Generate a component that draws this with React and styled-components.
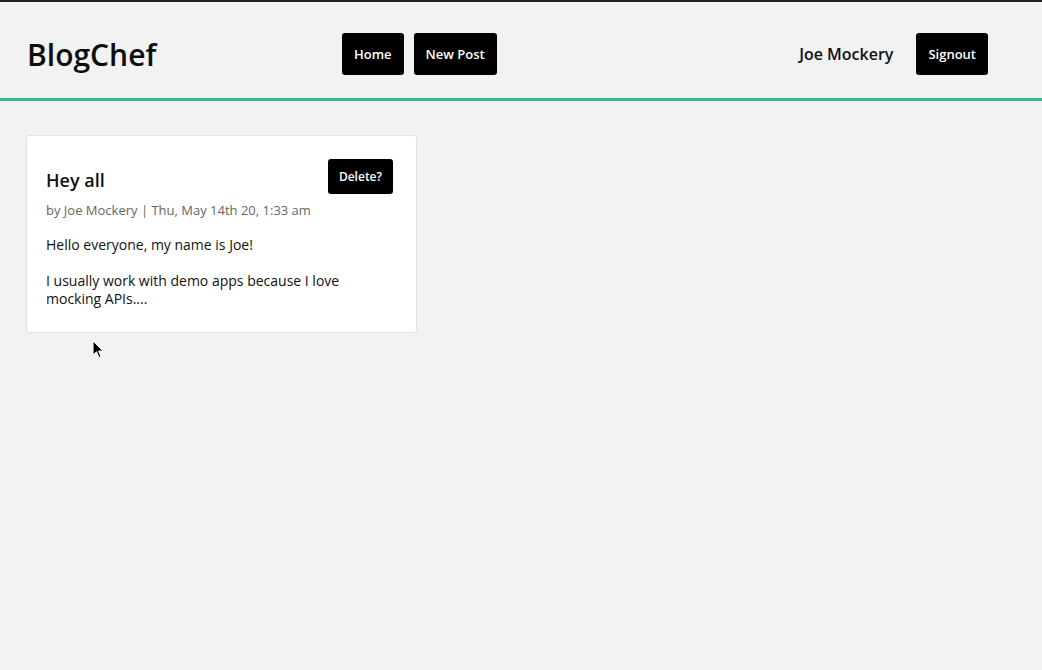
import React from "react";
import styled, { createGlobalStyle } from "styled-components";

const GlobalStyle = createGlobalStyle`
  html, body {
    margin: 0;
    padding: 0;
    background: #f2f2f2;
    font-family: "Open Sans", "Noto Sans", sans-serif;
    color: #111;
  }
  * { box-sizing: border-box; }
`;

const Page = styled.div`
  min-height: 670px;
  border-top: 2px solid #222;
  position: relative;
`;

const Header = styled.header`
  height: 99px;
  display: flex;
  align-items: center;
  padding: 8px 54px 0 27px;
  border-bottom: 3px solid #2dbd85;
`;

const Logo = styled.div`
  width: 315px;
  font-size: 30px;
  font-weight: 600;
  color: #0d0d0d;
`;

const Nav = styled.nav`
  display: flex;
  gap: 10px;
`;

const User = styled.div`
  margin-left: auto;
  display: flex;
  align-items: center;
  gap: 23px;
`;

const UserName = styled.span`
  font-size: 16px;
  font-weight: 600;
  color: #111;
`;

const Button = styled.button`
  background: #000;
  color: #fff;
  border: none;
  border-radius: 3px;
  font-family: inherit;
  font-weight: 600;
  font-size: ${(p) => (p.small ? "12px" : "13px")};
  height: ${(p) => (p.small ? "35px" : "42px")};
  padding: 0 ${(p) => (p.small ? "11px" : "12px")};
  cursor: pointer;
`;

const Main = styled.main`
  padding: 34px 26px;
`;

const Card = styled.article`
  width: 391px;
  background: #fff;
  border: 1px solid #e2e2e2;
  border-radius: 3px;
  padding: 23px 23px 24px 19px;
`;

const CardTop = styled.div`
  display: flex;
  justify-content: space-between;
  align-items: flex-start;
`;

const Title = styled.h2`
  margin: 0;
  padding-top: 9px;
  font-size: 18px;
  line-height: 24px;
  font-weight: 600;
`;

const Meta = styled.div`
  margin-top: 7px;
  font-size: 13px;
  line-height: 18px;
  color: #666;
`;

const Body = styled.div`
  margin-top: 17px;
  font-size: 14px;
  line-height: 18px;
  color: #111;

  p { margin: 0 0 18px; }
  p:last-child { margin-bottom: 0; }
`;

const Cursor = styled.svg`
  position: absolute;
  left: 92px;
  top: 338px;
`;

export default function App() {
  return (
    <Page>
      <GlobalStyle />
      <Header>
        <Logo>BlogChef</Logo>
        <Nav>
          <Button>Home</Button>
          <Button>New Post</Button>
        </Nav>
        <User>
          <UserName>Joe Mockery</UserName>
          <Button>Signout</Button>
        </User>
      </Header>
      <Main>
        <Card>
          <CardTop>
            <Title>Hey all</Title>
            <Button small>Delete?</Button>
          </CardTop>
          <Meta>by Joe Mockery | Thu, May 14th 20, 1:33 am</Meta>
          <Body>
            <p>Hello everyone, my name is Joe!</p>
            <p>I usually work with demo apps because I love mocking APIs....</p>
          </Body>
        </Card>
      </Main>
      <Cursor width="13" height="20" viewBox="0 0 13 20">
        <path d="M1 1 L1 15 L4.5 11.8 L7 17.5 L9 16.6 L6.6 11 L11 11 Z" fill="#000" stroke="#fff" strokeWidth="1" strokeLinejoin="round" />
      </Cursor>
    </Page>
  );
}
